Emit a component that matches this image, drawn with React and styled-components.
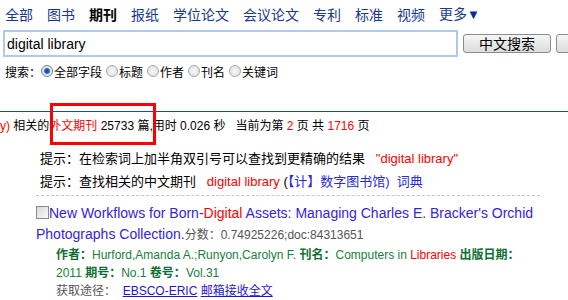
import styled, { createGlobalStyle } from 'styled-components'

const GlobalStyle = createGlobalStyle`
	body {
		margin: 0;
		background: #fff;
		font-family: 'Liberation Sans', 'Noto Sans CJK SC', sans-serif;
		color: #000;
		overflow: hidden;
	}
`

const navItems = ['全部', '图书', '期刊', '报纸', '学位论文', '会议论文', '专利', '标准', '视频']
const fields = ['全部字段', '标题', '作者', '刊名', '关键词']

const App = () => {
	return (
		<>
			<GlobalStyle />
			<Page>
				<Nav>
					{navItems.map((item) => (
						<NavItem key={item} active={item === '期刊'}>
							{item}
						</NavItem>
					))}
					<NavItem>
						更多<Arrow>▼</Arrow>
					</NavItem>
				</Nav>

				<SearchRow>
					<SearchInput value='digital library' readOnly />
					<SearchButton>中文搜索</SearchButton>
					<SearchButton />
				</SearchRow>

				<FieldRow>
					<span>搜索：</span>
					{fields.map((f, i) => (
						<Option key={f}>
							<Radio checked={i === 0} />
							{f}
						</Option>
					))}
				</FieldRow>

				<Divider />

				<Summary>
					<Red>y)</Red> 相关的<Red>外文期刊</Red> 25733 篇,用时 0.026 秒
					&nbsp;&nbsp;当前为第<Red> 2 </Red>页 共 <Red>1716</Red> 页
					<Mark />
				</Summary>

				<Tips>
					<Tip>
						提示：在检索词上加半角双引号可以查找到更精确的结果
						&nbsp;&nbsp;<Red>"digital library"</Red>
					</Tip>
					<Tip>
						提示：查找相关的中文期刊&nbsp;&nbsp;&nbsp;
						<Red>digital library</Red> (<Link>【计】数字图书馆)</Link>
						&nbsp;&nbsp;<Link>词典</Link>
					</Tip>
				</Tips>

				<Result>
					<Title>
						<Checkbox />
						<TitleLink>
							New Workflows for Born-<Red>Digital</Red> Assets: Managing
							Charles E. Bracker's Orchid Photographs Collection.
						</TitleLink>
						<Score>分数：0.74925226;doc:84313651</Score>
					</Title>
					<Meta>
						<Key>作者：</Key>Hurford,Amanda A.;Runyon,Carolyn F.{' '}
						<Key>刊名：</Key>Computers in <Red>Libraries</Red>{' '}
						<Key>出版日期：</Key>2011 <Key>期号：</Key>No.1{' '}
						<Key>卷号：</Key>Vol.31
					</Meta>
					<Access>
						获取途径：&nbsp;&nbsp;<Underlined>EBSCO-ERIC</Underlined>{' '}
						<Underlined>邮箱接收全文</Underlined>
					</Access>
				</Result>
			</Page>
		</>
	)
}
export default App

const Page = styled.div`
	width: 568px;
	height: 300px;
	overflow: hidden;
`

const Nav = styled.div`
	display: flex;
	align-items: center;
	gap: 14px;
	height: 29px;
	padding-left: 5px;
	font-size: 14px;
`

const NavItem = styled.span`
	color: ${(p) => (p.active ? '#000' : '#17388f')};
	font-weight: ${(p) => (p.active ? 'bold' : 'normal')};
	line-height: 18px;
	white-space: nowrap;
`

const Arrow = styled.span`
	font-size: 13px;
	color: #0c2d8c;
`

const SearchRow = styled.div`
	display: flex;
	align-items: center;
	gap: 5px;
	margin-top: 1px;
	padding-left: 3px;
	white-space: nowrap;
	overflow: hidden;
`

const SearchInput = styled.input`
	flex: none;
	box-sizing: border-box;
	width: 455px;
	height: 27px;
	margin: 0;
	border: 2px solid #adcbe8;
	padding: 0 2px;
	font-family: 'Liberation Sans', sans-serif;
	font-size: 14px;
	color: #000;
	outline: none;
`

const SearchButton = styled.button`
	flex: none;
	box-sizing: border-box;
	width: 88px;
	height: 19px;
	margin: 0;
	padding: 0;
	border: 1px solid #8c8c8c;
	border-radius: 3px;
	background: linear-gradient(#f6f6f6, #dcdcdc);
	font-family: 'Noto Sans CJK SC', sans-serif;
	font-size: 14px;
	line-height: 17px;
	color: #000;
`

const FieldRow = styled.div`
	display: flex;
	align-items: center;
	height: 18px;
	margin-top: 5px;
	padding-left: 5px;
	font-size: 12px;
	white-space: nowrap;
`

const Option = styled.span`
	display: flex;
	align-items: center;
	& + & {
		margin-left: 4px;
	}
`

const Radio = styled.span`
	box-sizing: border-box;
	width: 12px;
	height: 12px;
	border-radius: 50%;
	border: 1px solid ${(p) => (p.checked ? '#6f7f8f' : '#a9a9a9')};
	background: ${(p) =>
		p.checked
			? 'radial-gradient(circle, #0d3f8c 0, #2c6fc4 2.5px, #dfe9f5 3.5px, #f4f4f4 100%)'
			: 'radial-gradient(circle, #f8f8f8 0, #dcdcdc 100%)'};
	margin-right: 1px;
`

const Divider = styled.div`
	height: 1px;
	margin-top: 31px;
	background: #1d4c93;
`

const Summary = styled.div`
	position: relative;
	margin-top: 5px;
	font-size: 12px;
	line-height: 18px;
	white-space: nowrap;
`

const Mark = styled.span`
	position: absolute;
	left: 50px;
	top: -14px;
	width: 106px;
	height: 42px;
	box-sizing: border-box;
	border: 3px solid #f00;
`

const Red = styled.span`
	color: #f00;
`

const Tips = styled.div`
	padding-top: 12px;
	padding-left: 40px;
	font-size: 13px;
`

const Tip = styled.div`
	height: 23px;
	line-height: 23px;
	white-space: nowrap;
`

const Link = styled.span`
	color: #2a2ad6;
`

const Result = styled.div`
	width: 504px;
	margin-left: 36px;
	margin-top: 2px;
	padding-top: 7px;
	border-top: 1px dashed #c6c6c6;
	border-bottom: 1px dotted #b4b4b4;
`

const Title = styled.div`
	font-size: 14px;
	line-height: 21px;
`

const Checkbox = styled.span`
	display: inline-block;
	box-sizing: border-box;
	width: 13px;
	height: 13px;
	vertical-align: -1px;
	border: 1px solid #8a8a8a;
	background: linear-gradient(135deg, #d8d8d8, #fbfbfb);
`

const TitleLink = styled.span`
	color: #3323e2;
`

const Score = styled.span`
	font-size: 12px;
	color: #555;
`

const Meta = styled.div`
	padding-left: 20px;
	font-size: 12px;
	line-height: 18px;
	color: #168040;
`

const Key = styled.b`
	color: #0d6e33;
`

const Access = styled.div`
	padding-left: 20px;
	font-size: 12px;
	line-height: 18px;
	color: #555;
`

const Underlined = styled.span`
	color: #1f14d8;
	text-decoration: underline;
`
